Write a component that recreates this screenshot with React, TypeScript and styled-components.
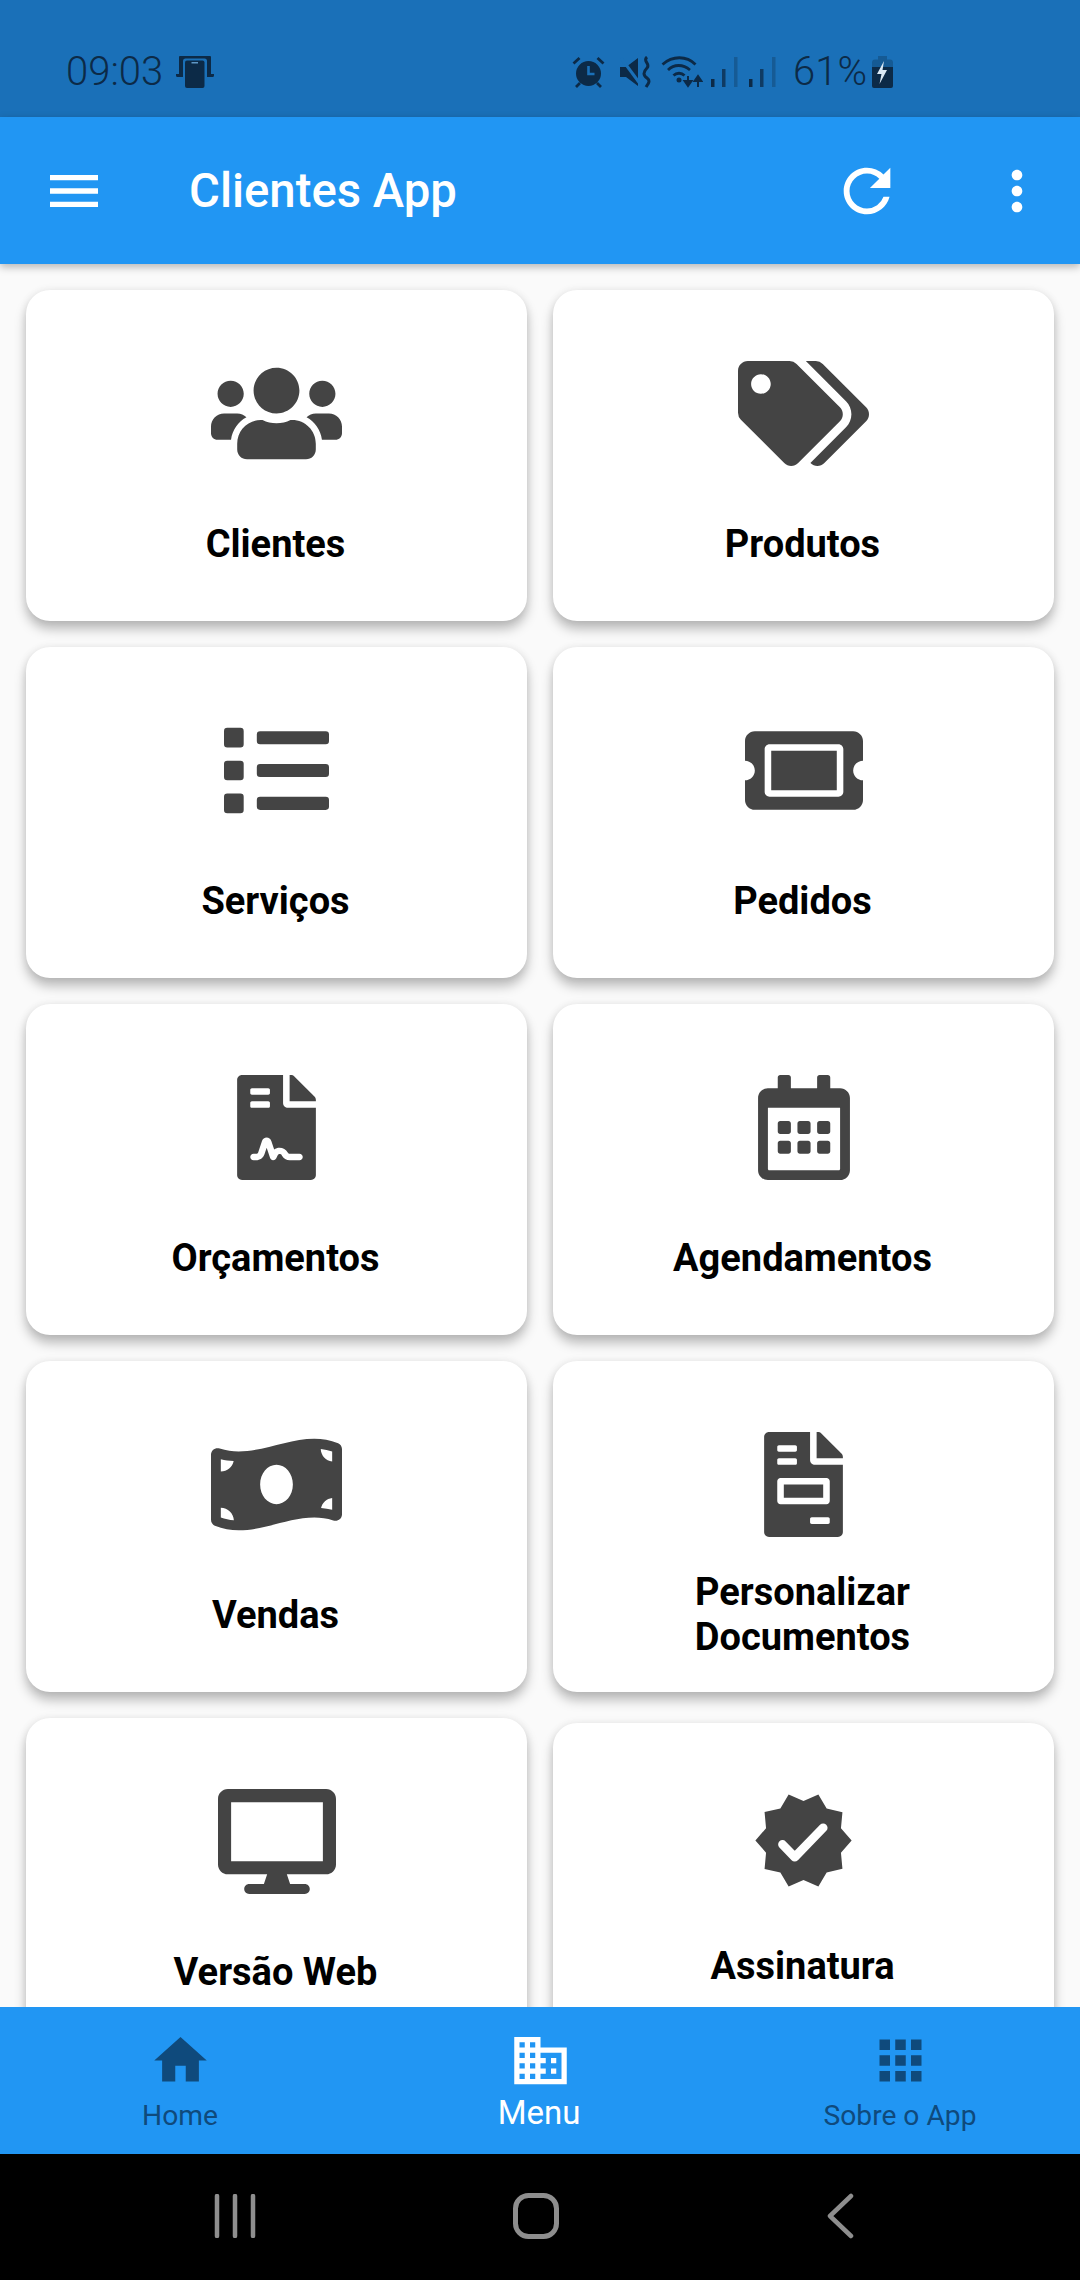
import React from "react";
import styled, { createGlobalStyle } from "styled-components";
import {
  FaUsers, FaTags, FaList, FaTicketAlt, FaFileContract, FaRegCalendarAlt,
  FaMoneyBillWave, FaFileInvoice, FaDesktop,
} from "react-icons/fa";
import { MdMenu, MdRefresh, MdMoreVert, MdHome, MdBusiness, MdApps } from "react-icons/md";

const DARK = "#0c2a47";
const BAR = "#1a70b8";
const BLUE = "#2196f3";
const MUTED = "#0f4a7c";

const Global = createGlobalStyle`
  html, body { margin: 0; padding: 0; background: #fafafa; }
  body { font-family: Roboto, "Liberation Sans", sans-serif; }
`;

const Page = styled.div`
  width: 1080px;
  height: 2280px;
  display: flex;
  flex-direction: column;
  overflow: hidden;
  background: #fafafa;
`;

const StatusBar = styled.div`
  height: 117px;
  flex: none;
  background: ${BAR};
  color: ${DARK};
  display: flex;
  align-items: center;
  padding: 50px 187px 24px 66px;
  box-sizing: border-box;
`;

const Clock = styled.span`
  font-size: 40px;
  font-weight: 300;
  line-height: 44px;
`;

const StatusGroup = styled.div`
  display: flex;
  align-items: center;
`;

const StatusLeft = styled(StatusGroup)`
  gap: 13px;
`;

const StatusRight = styled(StatusGroup)`
  margin-left: auto;
`;

const Percent = styled.span`
  font-size: 40px;
  font-weight: 300;
  line-height: 44px;
  margin: 0 5px 0 16px;
`;

const StatusIcon = styled.svg<{ $gap?: number }>`
  display: block;
  flex: none;
  margin-right: ${(p) => p.$gap ?? 0}px;
`;

const AppBar = styled.header`
  height: 147px;
  flex: none;
  background: ${BLUE};
  color: #fff;
  display: flex;
  align-items: center;
  padding: 0 31px 0 42px;
  box-sizing: border-box;
  position: relative;
  z-index: 2;
  box-shadow: 0 3px 8px rgba(0, 0, 0, 0.28);
`;

const Title = styled.h1`
  margin: 0 0 0 83px;
  font-size: 47.3px;
  font-weight: 500;
  line-height: 54px;
  flex: 1;
`;

const BarAction = styled.span<{ $size: number; $gap?: number }>`
  display: flex;
  margin-right: ${(p) => p.$gap ?? 0}px;
  svg {
    display: block;
    width: ${(p) => p.$size}px;
    height: ${(p) => p.$size}px;
  }
`;

const Content = styled.main`
  flex: 1;
  min-height: 0;
  overflow: hidden;
  display: grid;
  grid-template-columns: 501px 501px;
  grid-auto-rows: 331px;
  gap: 26px;
  padding: 26px 26px 0;
`;

const Card = styled.div<{ $nudge?: boolean }>`
  background: #fff;
  border-radius: 24px;
  box-shadow: 0 8px 12px rgba(0, 0, 0, 0.26), 0 0 8px rgba(0, 0, 0, 0.07);
  display: flex;
  flex-direction: column;
  align-items: center;
  padding-top: ${(p) => (p.$nudge ? 65 : 71)}px;
  margin-top: ${(p) => (p.$nudge ? 5 : 0)}px;
  height: 331px;
  box-sizing: border-box;
`;

const IconSlot = styled.div<{ $width: number }>`
  height: 105px;
  color: #444;
  display: flex;
  justify-content: center;
  svg {
    display: block;
    height: 105px;
    width: ${(p) => p.$width}px;
  }
`;

const Label = styled.div<{ $nudge?: boolean }>`
  margin-top: ${(p) => (p.$nudge ? 28 : 33)}px;
  height: 90px;
  display: flex;
  align-items: center;
  text-align: center;
  color: #000;
  font-size: 38px;
  font-weight: 700;
  line-height: 45px;
  width: 300px;
  padding-right: 2px;
  box-sizing: border-box;
  justify-content: center;
`;

const BottomNav = styled.nav`
  height: 147px;
  flex: none;
  background: ${BLUE};
  position: relative;
  z-index: 2;
  display: grid;
  grid-template-columns: repeat(3, 360px);
`;

const Tab = styled.div<{ $active?: boolean }>`
  display: flex;
  flex-direction: column;
  align-items: center;
  padding-top: 22px;
  color: ${(p) => (p.$active ? "#fff" : MUTED)};
  svg {
    display: block;
    width: 63px;
    height: 63px;
  }
`;

const TabLabel = styled.span<{ $active?: boolean }>`
  font-size: ${(p) => (p.$active ? 33 : 28.2)}px;
  line-height: 36px;
  margin-top: ${(p) => (p.$active ? 3 : 6)}px;
  padding-right: ${(p) => (p.$active ? 2 : 0)}px;
`;

const SystemBar = styled.div`
  height: 126px;
  flex: none;
  background: #000;
  display: flex;
  align-items: center;
  padding: 0 0 3px 214px;
  box-sizing: border-box;
`;

const SystemIcon = styled.svg<{ $gap?: number }>`
  display: block;
  flex: none;
  margin-right: ${(p) => p.$gap ?? 0}px;
`;

function Verified() {
  return (
    <svg viewBox="0 0 24 24" xmlns="http://www.w3.org/2000/svg">
      <path
        fill="currentColor"
        d="m23 12-2.44-2.79.34-3.69-3.61-.82-1.89-3.2L12 2.96 8.6 1.5 6.71 4.69 3.1 5.5l.34 3.7L1 12l2.44 2.79-.34 3.7 3.61.82L8.6 22.5l3.4-1.47 3.4 1.46 1.89-3.19 3.61-.82-.34-3.69L23 12z"
      />
      <path d="M7.2 12.9 10 15.8 16.5 9.1" fill="none" stroke="#fff" strokeWidth="2" strokeLinecap="round" strokeLinejoin="round" />
    </svg>
  );
}

const items: { label: string; icon: React.ReactNode; width: number; nudge?: boolean }[] = [
  { label: "Clientes", icon: <FaUsers />, width: 131 },
  { label: "Produtos", icon: <FaTags />, width: 131 },
  { label: "Serviços", icon: <FaList />, width: 105 },
  { label: "Pedidos", icon: <FaTicketAlt />, width: 118 },
  { label: "Orçamentos", icon: <FaFileContract />, width: 79 },
  { label: "Agendamentos", icon: <FaRegCalendarAlt />, width: 92 },
  { label: "Vendas", icon: <FaMoneyBillWave />, width: 131 },
  { label: "Personalizar Documentos", icon: <FaFileInvoice />, width: 79 },
  { label: "Versão Web", icon: <FaDesktop />, width: 118 },
  { label: "Assinatura", icon: <Verified />, width: 105, nudge: true },
];

function Signal({ gap }: { gap: number }) {
  return (
    <StatusIcon width="28" height="30" viewBox="0 0 28 30" $gap={gap}>
      <rect x="0" y="22" width="3.5" height="8" fill={DARK} />
      <rect x="11" y="12" width="3.5" height="18" fill={DARK} opacity=".75" />
      <rect x="23" y="0" width="3.5" height="30" fill={DARK} opacity=".3" />
    </StatusIcon>
  );
}

export default function App() {
  return (
    <Page>
      <Global />
      <StatusBar>
        <StatusLeft>
          <Clock>09:03</Clock>
          <StatusIcon width="38" height="32" viewBox="0 0 38 32">
            <path fill={DARK} d="M4 0h30a1 1 0 0 1 1 1v17h3v1.5a1.5 1.5 0 0 1-1.5 1.5H28v-3h-18v3H1.500A1.500 1.500 0 0 1 0 19.500V18h3V1a1 1 0 0 1 1-1z" />
            <rect x="7" y="2.500" width="24" height="29.500" rx="2.500" fill={BAR} />
            <rect x="9" y="4.500" width="19.500" height="27.500" rx="2" fill={DARK} />
            <rect x="15.500" y="6" width="6.500" height="1.500" fill="#5f97c6" />
          </StatusIcon>
        </StatusLeft>
        <StatusRight>
          <StatusIcon width="33" height="32" viewBox="0 0 33 32" $gap={15}>
            <circle cx="16.500" cy="17.500" r="12.500" fill={DARK} />
            <path d="M16.500 10v8h6" fill="none" stroke={BAR} strokeWidth="2.600" />
            <path d="M1.500 7.500 7.500 2M31.500 7.500 25.500 2M4 31l4-4M29 31l-4-4" stroke={DARK} strokeWidth="2.800" fill="none" />
          </StatusIcon>
          <StatusIcon width="32" height="32" viewBox="0 0 32 32" $gap={9}>
            <path fill={DARK} d="M0 11h6l12-9v28L6 21H0z" />
            <path d="M1 2 21 29" stroke={BAR} strokeWidth="3" />
            <path d="M27 1c-5 4 4 7 0 11s-4 7 0 10 1 6-1 9" fill="none" stroke={DARK} strokeWidth="3" />
          </StatusIcon>
          <StatusIcon width="42" height="33" viewBox="0 0 42 33" $gap={8}>
            <path d="M1.500 9.500c10-9 24-9 33 0M7 15c6-6 15-6 22 0M12.500 20.500c3-3 8-3 11 0" fill="none" stroke={DARK} strokeWidth="2.800" />
            <circle cx="18" cy="25" r="2.500" fill={DARK} />
            <path d="M27 21v8M23.500 26l3.500 5 3.500-5z" fill={DARK} stroke={DARK} strokeWidth="2" />
            <path d="M37 32v-8M33.500 26l3.500-5 3.500 5z" fill={DARK} stroke={DARK} strokeWidth="2" />
          </StatusIcon>
          <Signal gap={10} />
          <Signal gap={0} />
          <Percent>61%</Percent>
          <StatusIcon width="21" height="32" viewBox="0 0 21 32">
            <path d="M6 0h9v3.500h3a3 3 0 0 1 3 3V12H0V6.500a3 3 0 0 1 3-3h3z" fill={DARK} opacity=".32" />
            <path d="M0 11h21v19a2 2 0 0 1-2 2H2a2 2 0 0 1-2-2z" fill={DARK} />
            <path d="M12 5 5 18h4.500L7.500 28 15 14h-4.500z" fill="#dbe9f5" />
          </StatusIcon>
        </StatusRight>
      </StatusBar>

      <AppBar>
        <BarAction $size={64}><MdMenu /></BarAction>
        <Title>Clientes App</Title>
        <BarAction $size={70} $gap={83}><MdRefresh /></BarAction>
        <BarAction $size={64}><MdMoreVert /></BarAction>
      </AppBar>

      <Content>
        {items.map((it) => (
          <Card key={it.label} $nudge={it.nudge}>
            <IconSlot $width={it.width}>{it.icon}</IconSlot>
            <Label $nudge={it.nudge}>{it.label}</Label>
          </Card>
        ))}
      </Content>

      <BottomNav>
        <Tab><MdHome /><TabLabel>Home</TabLabel></Tab>
        <Tab $active><MdBusiness /><TabLabel $active>Menu</TabLabel></Tab>
        <Tab><MdApps /><TabLabel>Sobre o App</TabLabel></Tab>
      </BottomNav>

      <SystemBar>
        <SystemIcon width="42" height="44" viewBox="0 0 42 44" $gap={257}>
          <path d="M3 2v40M21 2v40M39 2v40" stroke="#8e8e8e" strokeWidth="4.500" strokeLinecap="round" fill="none" />
        </SystemIcon>
        <SystemIcon width="46" height="46" viewBox="0 0 46 46" $gap={267}>
          <rect x="2.500" y="2.500" width="41" height="41" rx="13" fill="none" stroke="#8e8e8e" strokeWidth="5" />
        </SystemIcon>
        <SystemIcon width="28" height="46" viewBox="0 0 28 46">
          <path d="M25 3 4 23l21 20" fill="none" stroke="#8e8e8e" strokeWidth="4.500" strokeLinecap="round" strokeLinejoin="round" />
        </SystemIcon>
      </SystemBar>
    </Page>
  );
}
